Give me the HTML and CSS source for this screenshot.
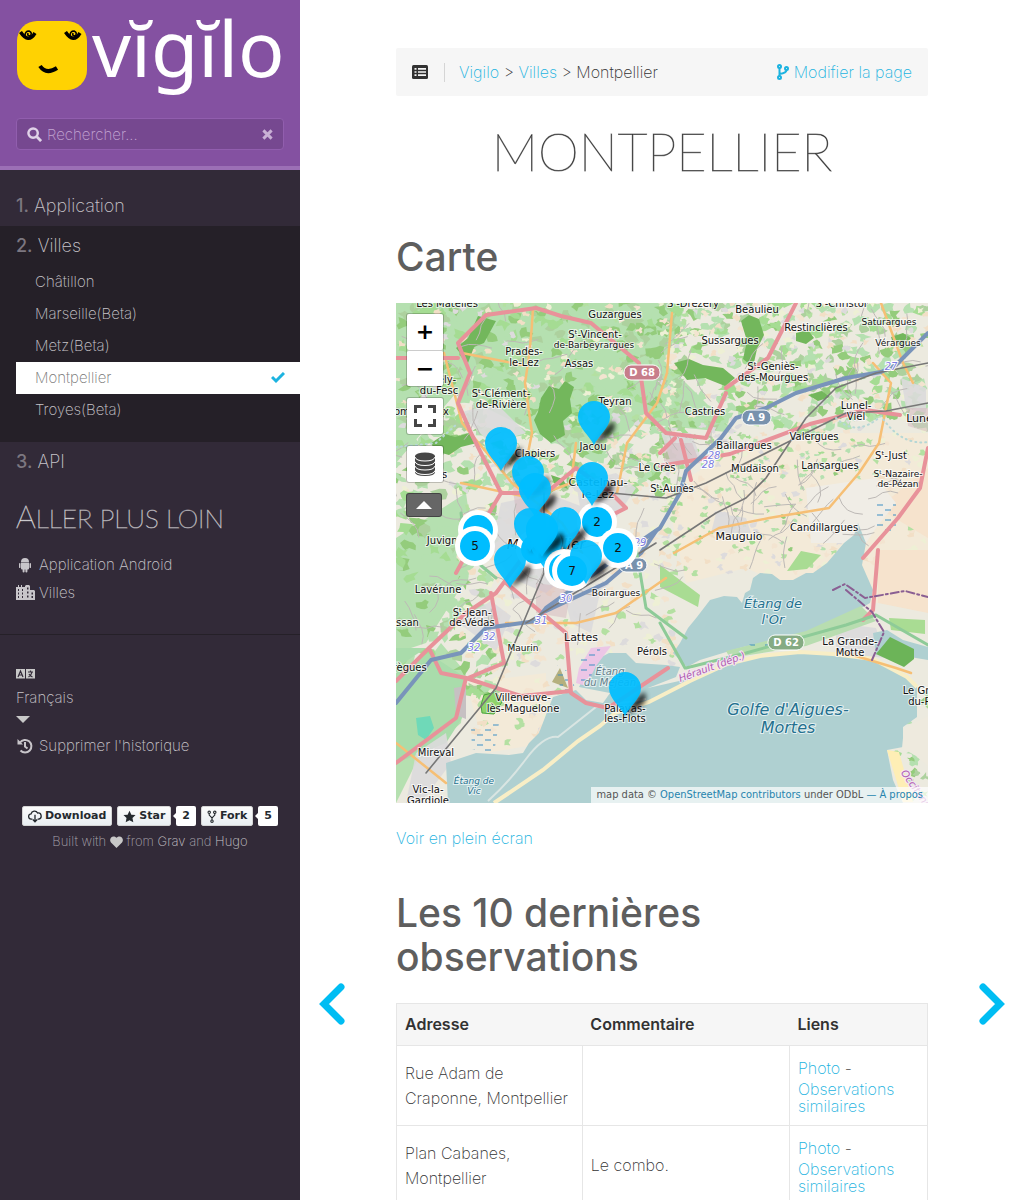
FILE: index.html
```html
<!DOCTYPE html>
<html lang="fr">
<head>
<meta charset="utf-8">
<meta name="viewport" content="width=device-width, initial-scale=1">
<title>Montpellier :: Vigilo</title>
<link rel="stylesheet" href="styles.css">
</head>
<body>
<nav class="sidebar">
  <header class="brand">
    <a class="logo" href="#" aria-label="Vigilo">
      <svg viewBox="0 0 268 84" role="img">
        <rect x="1" y="5" width="70" height="69" rx="20" fill="#ffd202"/>
        <g fill="none" stroke="#000">
          <path d="M4.500 16q8 12 14.500 1" stroke-width="3.500"/><path d="M9 20q0-5 4-5q4 2 1 5q-3 0-2-3" stroke-width="1.600"/>
          <path d="M49.500 16q8 12 14.500 1" stroke-width="3.500"/><path d="M54 20q0-5 4-5q4 2 1 5q-3 0-2-3" stroke-width="1.600"/>
          <path d="M24 50q6 9 17 2" stroke-width="4"/>
        </g>
        <text x="76" y="61" class="logo-word">vĭgĭlo</text>
      </svg>
    </a>
    <label class="search">
      <svg class="ico" viewBox="0 0 16 16" fill="none" stroke="currentColor"><circle cx="6.5" cy="6.5" r="5" stroke-width="2.6"/><path d="M10.500 10.500L15 15" stroke-width="3"/></svg>
      <input type="text" placeholder="Rechercher..." aria-label="Rechercher">
      <button class="clear" type="button" aria-label="Effacer"><svg viewBox="0 0 12 12" stroke="currentColor" stroke-width="3.200"><path d="M1.500 1.500l9 9M10.500 1.500l-9 9"/></svg></button>
    </label>
  </header>

  <ul class="topics">
    <li><a href="#"><b>1.</b> Application</a></li>
    <li class="open"><a href="#"><b>2.</b> Villes</a>
      <ul>
        <li><a href="#">Châtillon</a></li>
        <li><a href="#">Marseille(Beta)</a></li>
        <li><a href="#">Metz(Beta)</a></li>
        <li class="active"><a href="#">Montpellier <svg viewBox="0 0 14 12" fill="none" stroke="currentColor" stroke-width="3"><path d="M1 5l4 4 8-8"/></svg></a></li>
        <li><a href="#">Troyes(Beta)</a></li>
      </ul>
    </li>
    <li><a href="#"><b>3.</b> API</a></li>
  </ul>

  <h2 class="more">Aller plus loin</h2>
  <ul class="shortcuts">
    <li><a href="#"><svg viewBox="0 0 19 16" fill="currentColor"><path d="M5 5a4 4 0 0 1 8 0zM5 5.600h8v6a1 1 0 0 1-1 1h-.6v2a1 1 0 0 1-2 0v-2h-.8v2a1 1 0 0 1-2 0v-2H6a1 1 0 0 1-1-1zM3 6.500a.9.9 0 0 1 1.500 0v4a.9.9 0 0 1-1.500 0zM13.500 6.500a.9.9 0 0 1 1.500 0v4a.9.9 0 0 1-1.500 0z"/></svg>Application Android</a></li>
    <li><a href="#"><svg viewBox="0 0 19 16" fill="currentColor" fill-rule="evenodd"><path d="M0 2h2V0h1v2h2V0h1v2h3V1l1-1h3l1 1v4h4l1 1v9H0zM2 4v2h1V4zm4 0v2h1V4zM2 7.500v2h1v-2zm4 0v2h1v-2zM2 11v2h1v-2zm4 0v2h1v-2zM11 2.500v2h1.500v-2zm0 4v2h1.500v-2zm0 4v2h1.500v-2zM15.500 7.500v2H17v-2zm0 3.500v2H17v-2z"/></svg>Villes</a></li>
  </ul>
  <hr>
  <div class="prefs">
    <svg class="lang-ico" viewBox="0 0 19 10"><path d="M0 0h9v9.500H0zM10 0h9v9.500h-9z" fill="#c8c8c8"/><path d="M2 8l2.500-6 2.500 6M3 6h3M12 3h5M14.500 1.500V3M12.500 8q3-2 3.500-5M13 5q1 2 3.500 3" fill="none" stroke="#322a38" stroke-width="1.200"/></svg>
    <button class="lang" type="button">Français</button>
    <svg class="caret" viewBox="0 0 14 7"><path d="M0 0h14L7 7z" fill="#c8c8c8"/></svg>
    <a href="#"><svg viewBox="0 0 19 16" fill="none" stroke="currentColor" stroke-width="2"><path d="M4 4.500A6.300 6.300 0 1 1 4.500 12.500M9 4v4.500l2.500 2"/><path d="M1.500 1v5.500H7z" fill="currentColor" stroke="none"/></svg>Supprimer l'historique</a>
  </div>

  <footer class="foot">
    <div class="gh">
      <a class="btn" href="#"><svg viewBox="0 0 16 14" fill="none" stroke="currentColor" stroke-width="1.500"><path d="M5 10H4a3 3 0 0 1-.5-6 4 4 0 0 1 7.500-1 3.400 3.400 0 0 1 1 7h-1M8 5v8M5.500 10.500L8 13l2.500-2.500"/></svg>Download</a>
      <a class="btn" href="#"><svg class="sq" viewBox="0 0 14 14" fill="currentColor"><path d="M7 .8l2 4.200 4.500.5-3.300 3.100.9 4.600L7 11l-4.100 2.200.9-4.600L.5 5.500 5 5z"/></svg>Star</a>
      <a class="count" href="#">2</a>
      <a class="btn" href="#"><svg class="nar" viewBox="0 0 10 14" fill="none" stroke="currentColor" stroke-width="1.200"><circle cx="2" cy="2.500" r="1.300"/><circle cx="8" cy="2.500" r="1.300"/><circle cx="5" cy="12" r="1.300"/><path d="M2 4v1.500l3 3 3-3V4M5 8.500v2.200"/></svg>Fork</a>
      <a class="count" href="#">5</a>
    </div>
    <p>Built with <svg viewBox="0 0 14 13" fill="#c8c8c8"><path d="M7 13L1 7C-2 3 3-2 7 2c4-4 9 1 6 5z"/></svg> from <a href="#">Grav</a> and <a href="#">Hugo</a></p>
  </footer>
</nav>

<main class="page">
  <div class="topbar">
    <button type="button" class="toc" aria-label="Sommaire"><svg viewBox="0 0 16 14"><rect width="16" height="14" rx="1.500" fill="#323232"/><path d="M2.500 3.800h2M6 3.800h8M2.500 7h2M6 7h8M2.500 10.200h2M6 10.200h8" stroke="#f6f6f6" stroke-width="1.700"/></svg></button>
    <div class="crumbs"><a href="#">Vigilo</a> &gt; <a href="#">Villes</a> &gt; Montpellier</div>
    <a class="edit" href="#"><svg viewBox="0 0 12 16" fill="none" stroke="currentColor" stroke-width="2"><circle cx="2.500" cy="2.500" r="1.500"/><circle cx="2.500" cy="13.500" r="1.500"/><circle cx="9.500" cy="4.500" r="1.500"/><path d="M2.500 4v8M9.500 6q0 3-7 4"/></svg> Modifier la page</a>
  </div>
  <h1>Montpellier</h1>

  <h2>Carte</h2>
  <div class="map">
    <svg class="map-canvas" viewBox="0 0 532 500" preserveAspectRatio="xMidYMid slice">
      <defs>
        <filter id="soft" x="-50%" y="-50%" width="200%" height="200%"><feGaussianBlur stdDeviation="2.500"/></filter>
        <g id="pin"><path d="M0 0L10-16 19-24Q24-18 16-10Z" fill="#000" opacity=".8" filter="url(#soft)"/><path d="M0 0C-4-9-16-17-16-28a16 16 0 0 1 32 0C16-17 4-9 0 0z" fill="#00bdff" opacity=".93"/></g>
        <g id="cluster"><circle r="20" fill="#fff"/><circle r="15" fill="#00bdff"/></g>
        <pattern id="marsh" width="16" height="10" patternUnits="userSpaceOnUse"><path d="M1 2h6M9 7h6" stroke="#3c8fc4"/></pattern>
      </defs>
      <rect width="532" height="500" fill="#eceadf"/>
      <path fill="#b5e0b0" d="M0 0H290L270 60 340 130 240 120 200 160 60 90 0 160zM0 235L70 190 80 260 30 340 0 350zM0 500V400L45 340 70 370 65 420 20 460z"/>
      <path fill="#f3ead8" d="M270 190L330 150 420 130 532 130V300H430L350 265 290 280zM70 380L150 370 150 440 90 450z"/>
      <g id="landcover"></g>
      <path fill="#f6e3cd" d="M482 247H532V310L482 300zM482 205L532 165V235z"/>
      <path fill="#f0ede6" d="M410 185L480 175 500 200 480 225 470 240 415 240z"/>
      <path fill="#a9dcab" d="M0 370L32 350 70 375 66 415 50 440 0 460zM0 345L30 345 0 365z"/>
      <g fill="#dcdadb" opacity=".9"><path d="M105 200L150 190 190 205 185 260 150 290 115 275 95 245zM62 110L100 100 130 130 95 140zM180 180l40-10 20 15-20 30-35-5zM265 130l30 0 10 25-30 5zM60 318l35-20 20 15-15 35zM165 280l40 5-10 45-20-10zM320 210l30 5 5 15-40 0zM505 75l25 10v25l-20-5zM440 320l40 5 10 30-50-5zM20 450l30-20 5 30-30 40H10z"/></g>
      <path fill="#d3b5bd" opacity=".5" d="M115 170l40 20-5 30-30-10zM268 140l28 0 8 20-36 4zM510 105h22v24l-20-6zM140 280l35 5-5 30-30-5z"/>
      <path fill="#73b75c" d="M145 95l8-12 10 3 6-8 9 6-4 12 2 14-9 8 2 14-14 8-11-9-6-14 4-8zM60 45l12-10 10-22 18 5-12 22-10 4-6 16zM35 140l14-9 10 3 14-4 8 10-16 4-12 8-14-4zM345 18l8-6 10 4 5 16-7 14-4 18-10-8 4-18zM278 60l15-4 14 6 20 3 12 10-10 8-20-8-18 2zM400 30l12-3 6 8-8 6-10-3zM155 172l12 4 5 10-14-6zM495 34l12-4 8 5-6 7-12-2zM412 92l14-4 8 6-12 4z"/>
      <g fill="#afd0d1">
        <path d="M50 460L80 450 113 452 127 450 133 440 143 430 153 404 157 394 180 387 190 397 207 400 214 390 183 384 190 370 200 357 213 350 230 350 240 360 270 362 284 364 280 374 252 385 292 376 331 362 364 354 404 350 437 352 477 357 511 375 521 384 521 414 507 424 507 444 491 447 497 477 507 500H52z"/>
        <path d="M277 350L284 340 292 325 301 314 314 297 328 293 341 294 346 300 349 290 354 287 357 275 364 270 376 271 384 277 397 277 410 270 417 270 431 260 448 240 458 232 462 220 470 240 466 262 477 287 474 300 444 317 411 330 374 340 347 344 327 350 304 357 291 364zM477 330L491 327 507 337 532 344V357L514 354 494 344 480 352z"/>
      </g>
      <path d="M98 500L147 467 182 438 204 423 219 410 253 399 294 378 331 361 364 353 404 349 437 351 477 356 511 374 521 384" fill="none" stroke="#f8eec6" stroke-width="4"/>
      <path d="M92 498q20-18 38-42t32-22l38-30 50-8" fill="none" stroke="#d9e5e2" stroke-width="2"/>
      <path fill="#eeeade" d="M508 425l24-12v50l-12-10-14-8z"/><path fill="#feeeb5" d="M491 447l12 2 14 50h-10z"/>
      <path fill="#6cb458" d="M480 351l14-17 24 12v10l-10 8z"/>
      <path fill="#b8ddb0" d="M330 348l80-20 55-25 15 15-70 25-76 12z"/>
      <path fill="#a9dc93" d="M264 262l40 30-2 12-38-20zM493 315l36 2v14l-34-4zM405 248l20 4-14 14-20 2z"/>
      <path fill="#6fd9b8" d="M20 415l14-2 4 12-8 12-8-5z"/><path fill="#8ed36a" stroke="#4aa33c" d="M88 392l12-3 6 10-8 12-12-1-1-8z"/>
      <path fill="#ecc6e6" d="M183 365l12-20 20-2-15 20-10 20-10-3z"/><path fill="#b5b07e" d="M156 379l8-14 8 20z"/><path fill="#c6c0c2" d="M58 385l12-2v33l-10-4z"/>
      <path fill="url(#marsh)" d="M75 425l28-5-5 30-22-4zM160 362l15 8 5 20h-15zM480 200l20 0 0 30h-20zM185 350l20-6-12 36-10 0zM350 338l30 0-20 10z"/>
      <g id="lanes" fill="none" stroke="#bdb9b6" stroke-width="1"></g>
      <g fill="none" stroke-linecap="round" stroke-linejoin="round">
        <g stroke="#f6bf75" stroke-width="2.500"><path d="M137 5q-2 40-8 75l7 50-5 25M66 50l60 12M48 50l18 70 50 60 50 40 20 30M276 10l-5 60-10 30-30 40-10 50M477 60l18 20-12 60-20 30-30 35-60 10-50 10-45 25M485 0l22 60 10 20M0 440l50 40M450 350l50 15 15 5M110 320h70l40-10 50-35M180 140l-5 40-40 15-70-15"/></g>
        <g stroke="#e8929a" stroke-width="4"><path d="M400 0L372 55 330 85M0 460L60 415 70 375M33 345L0 378M33 345L70 310 100 290 130 250 180 230 230 205 215 190 180 165 150 190 105 190 75 130 62 100 74 70 62 40 90 12 140 5 165 13 195 20 243 60 250 110 270 130 310 135 330 90M105 190L90 215 60 270M110 280l60 50 5 60 15 10 22 5 60-40M33 345l12 25 25 5 55 18 50-5M95 290l13 70-36 15M264 163l70-12 80-30 55-14 35 5M532 145l-8 40-22 30-35 40M482 247l-5 60-10 10M0 55l62 0M285 137l10 40M264 150l15-15"/></g>
        <path d="M532 30L500 62 485 69 450 75 400 90 370 105 340 115 325 135 290 168 284 190 264 225 220 255 150 305 140 318 90 325 65 350 35 357 0 400" stroke="#7994ba" stroke-width="4"/><path d="M260 228l-15 22-35 30-60 28" stroke="#7994ba" stroke-width="4"/>
        <path d="M264 247L320 210 350 195 370 175 390 145 410 115 440 85 480 70 532 60M215 190l55 5 40-15 80-40 60-30 40-2 42-8M30 470L100 385 148 270 148 190M130 320l130-80" stroke="#777" stroke-width="1.600"/>
        <path d="M65 210l5 40 30 25M264 320l25 45M240 245l10 60 40 30M290 365l60-15 100-28 30-10 52 30" stroke="#8ecb98" stroke-width="3"/>
        <path d="M437 287l12-6 20 14 40-7 23 6M450 287l26 22 12 20-12 28" stroke="#8a5f93" stroke-width="2" stroke-dasharray="8 3 2 3"/>
        <path d="M0 144l40-4 22-20M440 115q20 20 45-2 20 30 47 26" stroke="#b6d7d5" stroke-width="2" stroke-dasharray="1 4"/>
      </g>
      <g class="town">
        <text x="51" y="4">Les Matelles</text><text x="219" y="15">Guzargues</text><text x="297" y="4">Sᵗ-Drézéry</text><text x="361" y="10">Beaulieu</text><text x="445" y="4">Sᵗ-Christol</text>
        <text x="199" y="35">Sᵗ-Vincent-</text><text x="198" y="45" class="sm">de-Barbeyrargues</text><text x="128" y="52">Prades-</text><text x="128" y="63">le-Lez</text><text x="183" y="64">Assas</text>
        <text x="420" y="28">Restinclières</text><text x="493" y="22" class="sm">Saturargues</text><text x="502" y="43" class="sm">Vérargues</text><text x="334" y="41">Sussargues</text><text x="377" y="67">Sᵗ-Geniès-</text><text x="377" y="78">des-Mourgues</text>
        <text x="51" y="80">ély-</text><text x="43" y="91">du-Fesc</text><text x="105" y="94">Sᵗ-Clément-</text><text x="105" y="105">de-Rivière</text><text x="219" y="102">Teyran</text><text x="309" y="112">Castries</text><text x="460" y="106">Lunel-</text><text x="460" y="117">Viel</text><text x="525" y="119" class="lg">Lunel</text>
        <text x="197" y="147">Jacou</text><text x="139" y="154">Clapiers</text><text x="348" y="146">Baillargues</text><text x="418" y="137">Valergues</text><text x="261" y="168">Le Crès</text><text x="359" y="169">Mudaison</text><text x="434" y="166">Lansargues</text><text x="495" y="156">Sᵗ-Just</text><text x="502" y="174" class="sm">Sᵗ-Nazaire-</text><text x="502" y="184" class="sm">de-Pézan</text>
        <text x="202" y="183" class="lg">Castelnau-</text><text x="202" y="195" class="lg">le-Lez</text><text x="276" y="189">Sᵗ-Aunès</text><text x="343" y="237" class="lg">Mauguio</text><text x="428" y="228">Candillargues</text><text x="52" y="241">Juvignac</text><text x="150" y="246" class="lg it">Montpellier</text>
        <text x="42" y="290">Lavérune</text><text x="220" y="293" class="sm">Boirargues</text><text x="76" y="313">Sᵗ-Jean-</text><text x="76" y="323">de-Védas</text><text x="2" y="323">Saussan</text><text x="185" y="338" class="lg">Lattes</text><text x="127" y="348" class="sm">Maurin</text><text x="256" y="352">Pérols</text><text x="5" y="368">Fabrègues</text>
        <text x="127" y="398">Villeneuve-</text><text x="127" y="409">lès-Maguelone</text><text x="229" y="409">Palavas-</text><text x="229" y="419">les-Flots</text><text x="40" y="453">Mireval</text><text x="32" y="490">Vic-la-</text><text x="32" y="501">Gardiole</text><text x="454" y="342">La Grande-</text><text x="454" y="353">Motte</text><text x="528" y="391">Le Grau-</text><text x="528" y="402">du-Roi</text><text x="22" y="112">Combaillaux</text><text x="32" y="175">Grabels</text>
      </g>
      <g class="water"><text x="377" y="305" class="mid">Étang de</text><text x="377" y="321" class="mid">l'Or</text><text x="392" y="412" class="big">Golfe d'Aigues-</text><text x="392" y="430" class="big">Mortes</text><text x="78" y="481">Étang de</text><text x="78" y="491">Vic</text><text x="214" y="372" class="grey">Étang</text><text x="214" y="383" class="grey">du Méjean</text></g>
      <g class="exit"><text x="318" y="156">28</text><text x="312" y="165">28</text><text x="495" y="67">27</text><text x="170" y="299">30</text><text x="145" y="321">31</text><text x="93" y="337">32</text><text x="78" y="348">32</text><text x="244" y="243">29</text></g>
      <text class="dept" transform="translate(317 367) rotate(-20)">Hérault (dép.)</text><text class="dept" transform="translate(518 489) rotate(55)">Occitanie</text>
      <g class="shield"><rect x="228" y="62" width="36" height="15" rx="7" fill="#c77d8a"/><text x="246" y="73">D 68</text><rect x="346" y="107" width="29" height="15" rx="7" fill="#7892ad"/><text x="360" y="118">A 9</text><rect x="223" y="255" width="28" height="14" rx="7" fill="#7892ad"/><text x="238" y="266">A 9</text><rect x="372" y="332" width="36" height="15" rx="7" fill="#85ab83"/><text x="390" y="343">D 62</text></g>
      <g class="markers">
        <use href="#cluster" x="82" y="227"/><use href="#cluster" x="140" y="246"/><use href="#cluster" x="79" y="243"/><use href="#cluster" x="201" y="219"/><use href="#cluster" x="222" y="245"/>
        <use href="#pin" x="198" y="142"/><use href="#pin" x="105" y="168"/><use href="#pin" x="132" y="197"/><use href="#pin" x="196" y="203"/><use href="#pin" x="139" y="214"/><use href="#pin" x="134" y="249"/><use href="#pin" x="169" y="248"/><use href="#pin" x="146" y="256"/><use href="#pin" x="150" y="268"/>
        <use href="#cluster" x="168" y="266"/><use href="#cluster" x="176" y="268"/><use href="#pin" x="146" y="254"/>
        <use href="#pin" x="114" y="285"/><use href="#pin" x="190" y="281"/><use href="#pin" x="229" y="413"/>
        <text x="79" y="247">5</text><text x="201" y="223">2</text><text x="222" y="249">2</text><text x="176" y="272">7</text>
      </g>
    </svg>
    <div class="controls">
      <div class="zoom"><button type="button" aria-label="Zoom avant">+</button><button type="button" aria-label="Zoom arrière">−</button></div>
      <button type="button" aria-label="Plein écran"><svg viewBox="0 0 22 22" fill="none" stroke="#464646" stroke-width="3"><path d="M1.500 8V1.500H8M14 1.500h6.500V8M20.500 14v6.500H14M8 20.500H1.500V14"/></svg></button>
      <button type="button" aria-label="Données"><svg viewBox="0 0 22 24"><path d="M1 4v16q0 4 10 4t10-4V4z" fill="#464646"/><ellipse cx="11" cy="4" rx="10" ry="3.500" fill="#464646"/><path d="M1 5q1 4 10 4t10-4M1 9.500q1 4 10 4t10-4M1 14q1 4 10 4t10-4M1 18.500q1 4 10 4t10-4" fill="none" stroke="#fff"/></svg></button>
      <button type="button" class="up" aria-label="Plus"><svg viewBox="0 0 16 8"><path d="M0 8L8 0l8 8z" fill="#fff"/></svg></button>
    </div>
    <div class="attribution">map data © <a href="#">OpenStreetMap contributors</a> under ODbL <a href="#">— À propos</a></div>
  </div>
  <p class="full"><a href="#">Voir en plein écran</a></p>

  <h2>Les 10 dernières observations</h2>
  <table>
    <thead><tr><th class="c1">Adresse</th><th class="c2">Commentaire</th><th>Liens</th></tr></thead>
    <tbody>
      <tr><td>Rue Adam de Craponne, Montpellier</td><td></td><td><a href="#">Photo</a> - <a class="like" href="#">Observations similaires</a></td></tr>
      <tr><td>Plan Cabanes, Montpellier</td><td>Le combo.</td><td><a href="#">Photo</a> - <a class="like" href="#">Observations similaires</a></td></tr>
    </tbody>
  </table>
</main>
<a class="turn prev" href="#" aria-label="Précédent"><svg viewBox="0 0 28 44"><path d="M23 5L6 22l17 17"/></svg></a>
<a class="turn next" href="#" aria-label="Suivant"><svg viewBox="0 0 28 44"><path d="M5 5l17 17L5 39"/></svg></a>
<script src="map.js"></script>
</body>
</html>
```
FILE: styles.css
```css
* { box-sizing: border-box; }
html { scrollbar-width: none; }
body { margin: 0; background: #fff; color: #323232; font: 200 16px/25px Inter, "Open Sans", sans-serif; }
a { color: #1cb3e0; text-decoration: none; }
button { font: inherit; color: inherit; border: 0; padding: 0; background: none; cursor: pointer; }
ul { list-style: none; margin: 0; padding: 0; }

.sidebar { position: fixed; inset: 0 auto 0 0; width: 300px; background: #322a38; color: #c8c5ca; overflow: hidden; font-size: 15px; }
.sidebar a { color: #c8c5ca; }
.brand { background: #8451a1; border-bottom: 4px solid #9c6fb6; padding: 16px; }
.logo, .logo svg { display: block; width: 100%; overflow: visible; }
.logo-word { font: 400 77px "Noto Sans", sans-serif; fill: #fff; }
.search { display: flex; align-items: center; gap: 5px; height: 32px; margin-top: 18px; padding: 0 10px; background: #764890; border: 1px solid #915eae; border-radius: 4px; color: #e0d2e8; }
.search .ico { width: 15px; height: 15px; }
.search input { flex: 1; min-width: 0; border: 0; padding: 0; outline: 0; background: none; color: #fff; font: inherit; }
.search input::placeholder { color: #c4a6d3; }
.clear { display: flex; color: #c9b1d5; }
.clear svg { width: 11px; }

.topics { padding-top: 16px; font-size: 18px; line-height: 40px; }
.topics > li > a { display: block; padding: 0 16px; }
.topics b { font-weight: 500; color: #7c7780; }
.topics > .open { background: #252028; padding-bottom: 16px; }
.open li { font-size: 15px; line-height: 32px; margin-left: 16px; }
.open li a { display: flex; align-items: center; justify-content: space-between; padding: 0 15px 0 19px; }
.open .active { background: #fff; }
.open .active a { color: #777; }
.open .active svg { width: 14px; color: #1cb3e0; }
.more { margin: 16px 16px 0; font: 100 26px/36px Lato, sans-serif; text-transform: uppercase; color: #fff; -webkit-text-stroke: 1px #fff6; }
.more::first-letter { font-size: 31px; }
.shortcuts { padding: 15px 16px 0; line-height: 28px; }
.shortcuts a, .prefs a { display: flex; align-items: center; gap: 4px; }
.shortcuts svg, .prefs a svg { width: 19px; height: 16px; }
.sidebar hr { margin: 27px 0 0; border: 0; border-top: 1px solid #252028; }
.prefs { display: flex; flex-direction: column; align-items: flex-start; padding: 34px 16px 0; }
.lang-ico { width: 19px; height: 10px; }
.lang { margin-top: 6px; line-height: 25px; }
.caret { width: 14px; height: 7px; margin-top: 6px; }
.prefs a { margin-top: 10px; }
.foot { margin-top: 48px; text-align: center; font-size: 13px; color: #a9a5ad; }
.gh { display: flex; justify-content: center; gap: 5px; font: 700 11px/18px "DejaVu Sans", sans-serif; }
.sidebar .gh a { color: #24292e; }
.gh .btn { display: flex; align-items: center; gap: 3px; height: 20px; padding: 0 5px; border: 1px solid #d5d5d5; border-radius: 2px; background: linear-gradient(#fcfcfc, #e9eef2); }
.gh .btn svg { width: 14px; height: 13px; }
.gh .btn .sq { width: 13px; }
.gh .btn .nar { width: 10px; }
.gh .count { position: relative; height: 20px; padding: 1px 6px; background: #fff; border-radius: 2px; }
.gh .count::before { content: ""; position: absolute; left: -3px; top: 7px; border: 3px solid transparent; border-left: 0; border-right-color: #fff; }
.foot p { margin: 3px 0 0; }
.foot p svg { width: 13px; height: 12px; vertical-align: -2px; }

.page { margin-left: 300px; padding: 48px 96px 0; }
.topbar { display: flex; align-items: center; height: 48px; padding: 0 16px; background: #f6f6f6; border-radius: 2px; }
.toc { display: flex; padding-right: 16px; border-right: 1px solid #d5d5d5; height: 19px; align-items: center; }
.toc svg { width: 16px; height: 14px; }
.crumbs { flex: 1; padding-left: 14px; }
.edit { display: flex; align-items: center; gap: 5px; }
.edit svg { width: 12px; height: 16px; }
h1 { margin: 21px 0 50px; font: 100 52px/68px Lato, sans-serif; text-align: center; text-transform: uppercase; color: #222; -webkit-text-stroke: 1px #2228; }
.page h2 { margin: 0 0 24px; font-size: 39px; line-height: 44px; font-weight: 500; color: #5e5e5e; }

.map { position: relative; height: 500px; overflow: hidden; }
.map-canvas { display: block; width: 100%; height: 100%; }
.map-canvas text { text-anchor: middle; font: 10px "DejaVu Sans", sans-serif; }
.map-canvas .town text { fill: #111; stroke: #fff; stroke-width: 2px; stroke-opacity: .7; paint-order: stroke; }
.map-canvas .town .sm { font-size: 9px; }
.map-canvas .town .lg { font-size: 11px; }
.map-canvas .town .it { font-size: 14px; font-style: italic; }
.map-canvas .water text { font-style: italic; font-size: 9px; fill: #24708f; stroke: #e4f0f1; stroke-width: 2px; paint-order: stroke; }
.map-canvas .water .mid { font-size: 13px; }
.map-canvas .water .big { font-size: 16px; }
.map-canvas .water .grey { font-size: 10px; fill: #637e8a; }
.map-canvas .exit text { font-style: italic; fill: #7c7ce0; stroke: #fff; stroke-width: 2px; paint-order: stroke; }
.map-canvas .dept { font-style: italic; fill: #b05cb0; stroke: #f3e6f3; stroke-width: 2px; paint-order: stroke; }
.shield rect { stroke: #fff; stroke-width: 1px; }
.map-canvas .shield text { font-weight: 700; fill: #fff; }
.map-canvas .markers text { font-size: 12px; fill: #111; }
.controls { position: absolute; left: 11px; top: 11px; display: flex; flex-direction: column; gap: 12px; width: 36px; }
.controls button { display: flex; align-items: center; justify-content: center; width: 36px; height: 36px; background: #fff; border-radius: 2px; box-shadow: 0 0 0 1px #0003; }
.controls .zoom { border-radius: 2px; box-shadow: 0 0 0 1px #0003; }
.controls .zoom button { box-shadow: none; font: 700 22px/36px "DejaVu Sans", sans-serif; color: #000; }
.zoom button + button { border-top: 1px solid #ccc; }
.controls button svg { width: 22px; height: 24px; }
.controls .up { width: 34px; height: 22px; background: #666; box-shadow: 0 0 0 1px #444; }
.controls .up svg { width: 16px; height: 8px; }
.attribution { position: absolute; right: 0; bottom: 0; padding: 0 5px; background: #ffffffb3; font: 400 11px/16px "DejaVu Sans Condensed", "Noto Sans", sans-serif; color: #555; white-space: nowrap; }
.attribution a { color: #2684ae; }
.full { margin: 23px 0 40px; }

table { width: 100%; border-collapse: collapse; table-layout: fixed; }
th, td { padding: 8px; text-align: left; }
thead { background: #f6f6f6; }
th { height: 42px; font-weight: 600; border: solid #e6e6e6; border-width: 1px 0; }
th:first-child { border-left-width: 1px; }
th:last-child { border-right-width: 1px; }
td { height: 80px; border: 1px solid #e6e6e6; }
.c1 { width: 35%; }
.c2 { width: 39%; }
.like { display: block; line-height: 17px; }
.turn { position: fixed; top: 982px; }
.prev { left: 318px; }
.next { right: 18px; }
.turn svg { display: block; width: 28px; height: 44px; fill: none; stroke: #00bdf3; stroke-width: 7; stroke-linecap: round; }
```
FILE: map.js
```js
// Scatters woods, fields, hamlets and lanes over the land of the map.
(function () {
  var seed = 7;
  function rnd() { seed = (seed * 16807) % 2147483647; return seed / 2147483647; }
  var ns = "http://www.w3.org/2000/svg";
  function add(parent, d, fill) {
    var p = document.createElementNS(ns, "path");
    p.setAttribute("d", d);
    if (fill) p.setAttribute("fill", fill);
    document.getElementById(parent).appendChild(p);
  }
  var green = ["#add19e", "#a5dc93", "#b5e0b0", "#94cc7c", "#b5e0b0"];
  var field = ["#f2dfc6", "#eef0d5", "#f3e4d0", "#b4e0a2", "#dddbdc"];
  // x, y, width, height, count, size, palette
  var zones = [
    [0, 0, 290, 190, 420, 7, green], [0, 0, 290, 190, 220, 4, field],
    [264, 0, 268, 130, 240, 7, green], [264, 0, 268, 130, 220, 4, field],
    [0, 190, 100, 200, 110, 8, green], [60, 180, 220, 180, 220, 5, field],
    [264, 130, 268, 140, 220, 4, field], [264, 130, 200, 120, 130, 3, green],
    [80, 330, 100, 110, 60, 5, field], [500, 380, 32, 120, 20, 5, green]
  ];
  zones.forEach(function (z) {
    for (var i = 0; i < z[4]; i++) {
      var cx = z[0] + rnd() * z[2], cy = z[1] + rnd() * z[3], n = 9, d = "M";
      for (var k = 0; k < n; k++) {
        var r = z[5] * (0.3 + rnd()), a = k / n * 6.283;
        d += (cx + r * Math.cos(a)).toFixed(1) + " " + (cy + r * 0.8 * Math.sin(a)).toFixed(1) + " ";
      }
      add("landcover", d + "z", z[6][Math.floor(rnd() * 5)]);
    }
  });
  [[0, 0, 532, 240, 90], [0, 240, 260, 90, 30], [300, 150, 150, 100, 25]].forEach(function (z) {
    for (var i = 0; i < z[4]; i++) {
      var x = z[0] + rnd() * z[2], y = z[1] + rnd() * z[3], a = rnd() * 6.283;
      var d = "M" + x.toFixed(1) + " " + y.toFixed(1);
      for (var k = 0; k < 4; k++) {
        a += rnd() - 0.5;
        d += "l" + (8 * Math.cos(a)).toFixed(1) + " " + (8 * Math.sin(a)).toFixed(1);
      }
      add("lanes", d);
    }
  });
})();
```
